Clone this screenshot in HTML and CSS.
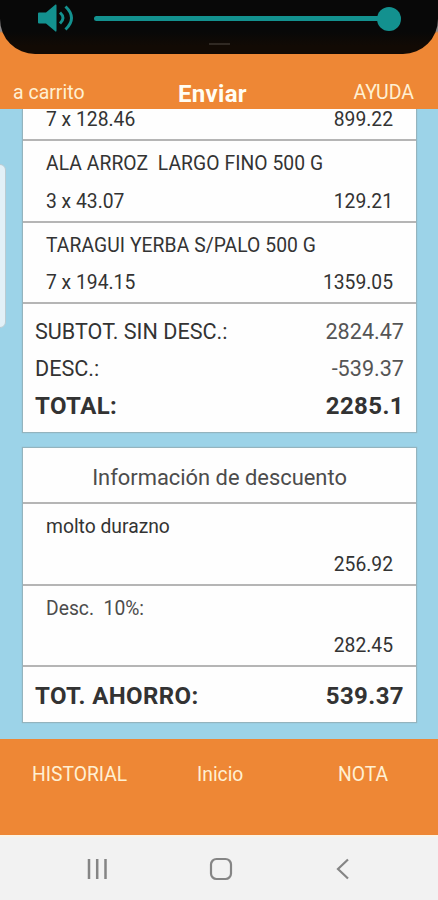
FILE: index.html
```html
<!DOCTYPE html>
<html lang="es">
<head>
  <meta charset="UTF-8">
  <title>Enviar</title>
  <link rel="stylesheet" href="styles.css">
</head>
<body>
  <div class="phone">
    <!-- Volume panel and header -->
    <header class="header">
      <div class="volume">
        <svg class="speaker" width="36" height="28" viewBox="0 0 36 28">
          <path d="M0 9.500q0-1 1-1h7l9.500-8q1-.5 1 1v25q0 1.500-1 1l-9.500-8h-7q-1 0-1-1z" fill="#13918f"/>
          <path d="M22 8.500q6 5.500 0 11M27.500 2.500q12 11.500 0 23" fill="none" stroke="#13918f" stroke-width="3"/>
        </svg>
        <div class="slider"><span class="thumb"></span></div>
        <div class="handle"></div>
      </div>
      <nav class="header-nav">
        <span>a carrito</span>
        <h1>Enviar</h1>
        <span>AYUDA</span>
      </nav>
    </header>

    <main class="content">
      <div class="edge-panel"></div>

      <section class="card order">
        <div class="item first">
          <div class="line"><span>7 x 128.46</span><span>899.22</span></div>
        </div>
        <div class="item">
          <div class="line name"><span>ALA ARROZ  LARGO FINO 500 G</span></div>
          <div class="line"><span>3 x 43.07</span><span>129.21</span></div>
        </div>
        <div class="item">
          <div class="line name"><span>TARAGUI YERBA S/PALO 500 G</span></div>
          <div class="line"><span>7 x 194.15</span><span>1359.05</span></div>
        </div>
        <div class="totals">
          <div class="sum"><span>SUBTOT. SIN DESC.:</span><span class="value">2824.47</span></div>
          <div class="sum"><span>DESC.:</span><span class="value">-539.37</span></div>
          <div class="sum total"><span>TOTAL:</span><span>2285.1</span></div>
        </div>
      </section>

      <section class="card">
        <h2>Información de descuento</h2>
        <div class="item">
          <div class="line"><span>molto durazno</span></div>
          <div class="line right"><span>256.92</span></div>
        </div>
        <div class="item">
          <div class="line light"><span>Desc.  10%:</span></div>
          <div class="line right"><span>282.45</span></div>
        </div>
        <div class="sum total savings"><span>TOT. AHORRO:</span><span>539.37</span></div>
      </section>
    </main>

    <footer class="footer">
      <span>HISTORIAL</span>
      <span>Inicio</span>
      <span>NOTA</span>
    </footer>

    <!-- Android buttons -->
    <div class="system-nav">
      <svg width="22" height="24" viewBox="0 0 22 24">
        <path d="M3 2v20M11.200 2v20M19.500 2v20" fill="none" stroke="#858585" stroke-width="2.500"/>
      </svg>
      <svg class="home" width="24" height="24" viewBox="0 0 24 24">
        <rect x="2" y="2" width="20" height="20" rx="5.500" fill="none" stroke="#858585" stroke-width="2.200"/>
      </svg>
      <svg width="14" height="24" viewBox="0 0 14 24">
        <path d="M12 2.500L2 12L12 21.500" fill="none" stroke="#858585" stroke-width="2.200"/>
      </svg>
    </div>
  </div>
</body>
</html>
```
FILE: styles.css
```css
* {
  box-sizing: border-box;
}

body {
  margin: 0;
  font-family: Roboto, sans-serif;
  color: #333;
}

.phone {
  width: 438px;
  height: 900px;
  display: flex;
  flex-direction: column;
  overflow: hidden;
}

/* Header */
.header {
  height: 109px;
  background: linear-gradient(#8d8989 31px, #ee8735 33px);
}

.volume {
  position: relative;
  height: 54px;
  padding: 0 38px;
  display: flex;
  background: linear-gradient(#080808 32px, #120a04 46px);
  border-radius: 0 0 35px 35px;
}

.speaker {
  margin-top: 4px;
}

.slider {
  position: relative;
  width: 294px;
  height: 5px;
  margin: 16px 0 0 20px;
  border-radius: 3px;
  background: #13918f;
}

.thumb {
  position: absolute;
  right: -13px;
  top: -9px;
  width: 24px;
  height: 24px;
  border-radius: 50%;
  background: #13918f;
}

.handle {
  position: absolute;
  left: 209px;
  top: 43px;
  width: 21px;
  height: 2px;
  background: #302923;
}

.header-nav {
  height: 55px;
  padding: 23px 24px 0 13px;
  display: grid;
  grid-template-columns: 165px 1fr auto;
  line-height: 32px;
  font-size: 19.500px;
  color: #fff0d3;
}

.header-nav h1 {
  margin: 0;
  font-size: 24px;
  line-height: 34px;
  letter-spacing: 0.3px;
  font-weight: bold;
  color: #fffdf3;
}

/* Receipt */
.content {
  position: relative;
  height: 630px;
  padding: 0 22px 0 23px;
  background: #9cd3e8;
  overflow: hidden;
}

.edge-panel {
  position: absolute;
  left: -8px;
  top: 55px;
  width: 14px;
  height: 164px;
  border: 1px solid #b9cbd2;
  border-radius: 6px;
  background: #e2f0f7;
}

.card {
  background: #fefefe;
  box-shadow: 0 0 1px 1px #94b4be;
}

.order {
  height: 323px;
  margin-bottom: 16px;
}

.item {
  height: 81.500px;
  padding: 4px 23px 0;
  border-bottom: 2px solid #b5b5b5;
}

.first {
  height: 32px;
  padding-top: 0;
}

.first .line {
  line-height: 21px;
}

.line {
  display: flex;
  justify-content: space-between;
  font-size: 19.300px;
  line-height: 37.500px;
  white-space: pre;
}

.name {
  letter-spacing: 0.07px;
}

.right {
  justify-content: flex-end;
}

.light {
  color: #4c4c4c;
}

.totals {
  padding-top: 10px;
}

.sum {
  display: flex;
  justify-content: space-between;
  padding: 0 12px;
  font-size: 21.600px;
  line-height: 36.500px;
}

.value {
  color: #555;
}

.total {
  font-size: 24px;
  line-height: 39px;
  letter-spacing: 0.4px;
  font-weight: bold;
}

.savings {
  padding-top: 10px;
  height: 55px;
}

.card h2 {
  margin: 0;
  height: 56px;
  border-bottom: 2px solid #b5b5b5;
  font-size: 21.900px;
  line-height: 60px;
  font-weight: normal;
  text-align: center;
  color: #4c4c4c;
}

/* Bottom bars */
.footer {
  height: 96px;
  padding: 20px 32px 0;
  display: grid;
  grid-template-columns: 165px 141px 1fr;
  background: #ee8735;
  font-size: 19.300px;
  line-height: 32px;
  color: #fff0d3;
}

.system-nav {
  height: 65px;
  padding: 20px 88px 0 86px;
  display: flex;
  justify-content: space-between;
  background: #f2f2f2;
  border-top: 2px solid #fbf3e5;
}

.home {
  margin-right: 3px;
}
```
